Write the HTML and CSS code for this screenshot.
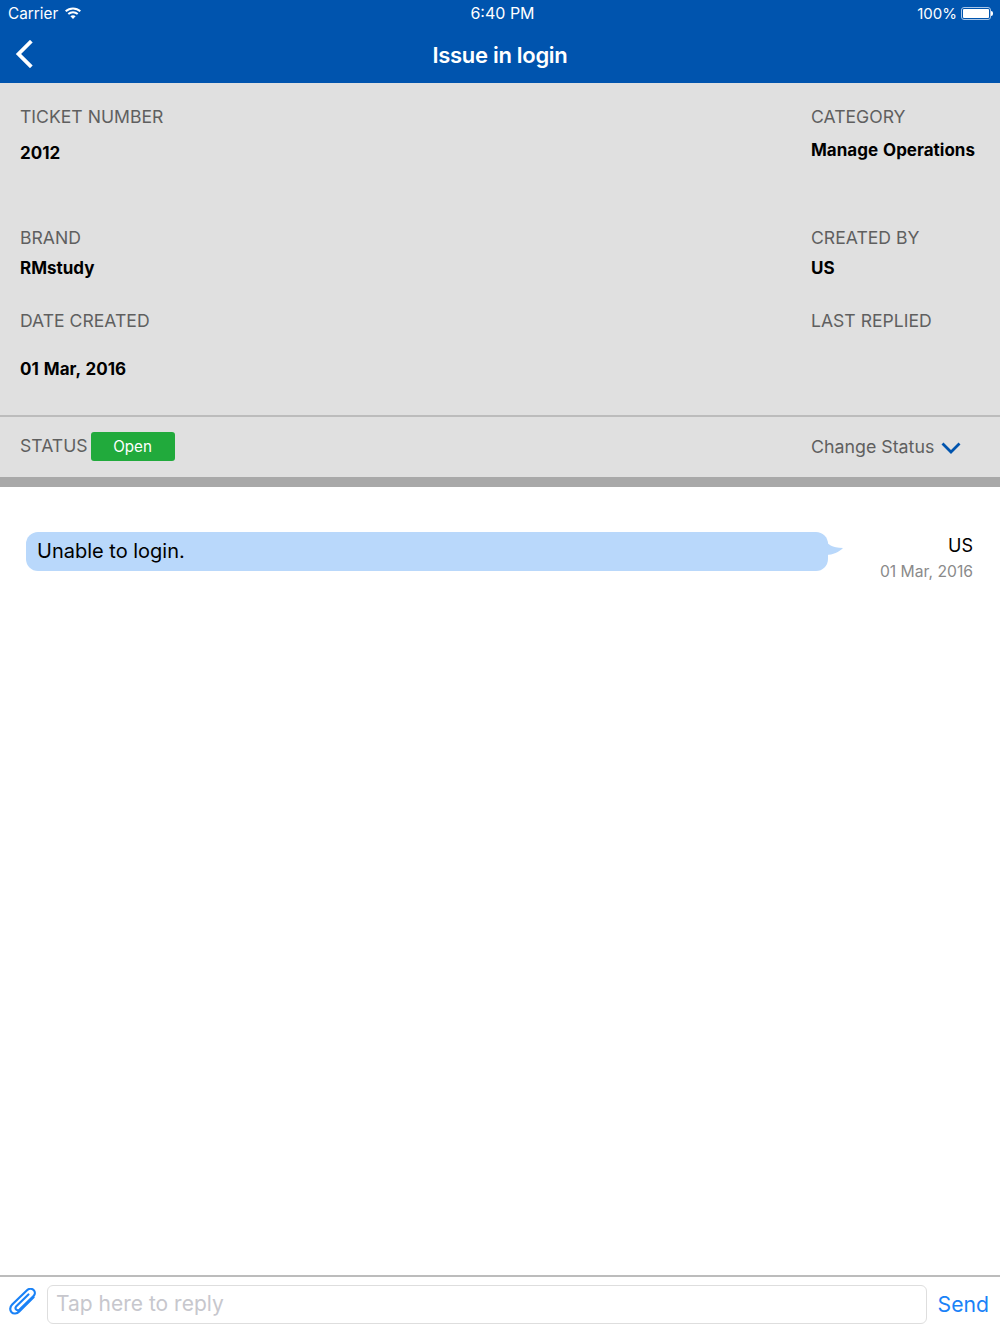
FILE: index.html
```html
<!DOCTYPE html>
<html lang="en">
<head>
    <meta charset="UTF-8">
    <meta name="viewport" content="width=device-width, initial-scale=1.0">
    <title>Issue in login</title>
    <link rel="stylesheet" href="styles.css">
</head>
<body>
    <div class="screen">
        <!-- Status bar + nav -->
        <header class="top-bar">
            <div class="status-bar">
                <div class="status-left">
                    <span>Carrier</span>
                    <svg class="wifi" width="16" height="12" viewBox="0 0 16 12" fill="none" stroke="#fff" stroke-width="2">
                        <path d="M.7 4.300C4.800 .4 11.200 .4 15.300 4.300"/>
                        <path d="M3.300 7C6 4.500 10 4.500 12.700 7"/>
                        <path d="M8 12L5.400 9.200C6.900 8 9.100 8 10.600 9.200Z" fill="#fff" stroke="none"/>
                    </svg>
                </div>
                <span class="status-time">6:40 PM</span>
                <div class="status-right">
                    <span>100%</span>
                    <div class="battery"><div class="battery-fill"></div></div>
                    <div class="battery-tip"></div>
                </div>
            </div>
            <nav class="nav-bar">
                <svg class="back-icon" width="18" height="28" viewBox="0 0 18 28" fill="none" stroke="#fff" stroke-width="3.800" stroke-linecap="square">
                    <path d="M15 2.500L3.500 14L15 25.500"/>
                </svg>
                <h1>Issue in login</h1>
            </nav>
        </header>

        <!-- Ticket details -->
        <section class="details">
            <div class="detail-grid">
                <div class="cell">
                    <div class="label">TICKET NUMBER</div>
                    <div class="value gap-lg">2012</div>
                </div>
                <div class="cell">
                    <div class="label">CATEGORY</div>
                    <div class="value gap-md">Manage Operations</div>
                </div>
                <div class="cell">
                    <div class="label">BRAND</div>
                    <div class="value gap-sm">RMstudy</div>
                </div>
                <div class="cell">
                    <div class="label">CREATED BY</div>
                    <div class="value gap-sm">US</div>
                </div>
                <div class="cell">
                    <div class="label">DATE CREATED</div>
                    <div class="value gap-xl">01 Mar, 2016</div>
                </div>
                <div class="cell">
                    <div class="label">LAST REPLIED</div>
                </div>
            </div>
            <div class="status-row">
                <div class="status-info">
                    <span class="label">STATUS</span>
                    <span class="badge">Open</span>
                </div>
                <div class="change-status">
                    <span>Change Status</span>
                    <svg class="chevron" width="20" height="12" viewBox="0 0 20 12" fill="none" stroke="#0054ae" stroke-width="2.800">
                        <path d="M1.500 1.500L10 10L18.500 1.500"/>
                    </svg>
                </div>
            </div>
        </section>

        <!-- Messages -->
        <main class="thread">
            <div class="message">
                <div class="bubble">
                    Unable to login.
                    <svg class="bubble-tail" width="18" height="16" viewBox="0 0 18 16">
                        <path d="M0 0C1 4 6 8 17 8C13 12 7 15 0 15Z" fill="#b9d8fb"/>
                    </svg>
                </div>
                <div class="meta">
                    <div class="meta-author">US</div>
                    <div class="meta-date">01 Mar, 2016</div>
                </div>
            </div>
        </main>

        <!-- Reply box -->
        <footer class="reply-bar">
            <svg class="clip-icon" width="28" height="28" viewBox="1.500 1.500 24.500 24.500" fill="none" stroke="#1a82f7" stroke-width="1.900" stroke-linecap="round">
                <path d="M23 9.500L10.500 22C8.300 24.200 5.300 24.300 3.700 22.700C2 21 2.300 18 4.300 16L17.500 3.300C19 1.900 21.500 1.800 23 3.300C24.500 4.800 24.500 7 23 8.500L10.800 20.300C9.800 21.200 8.500 21.200 7.700 20.400C6.900 19.600 7 18.300 7.900 17.400L18.500 7.200"/>
            </svg>
            <div class="reply-input">Tap here to reply</div>
            <span class="send-btn">Send</span>
        </footer>
    </div>
</body>
</html>
```

FILE: styles.css
```css
:root {
    --primary: #0054ae;
    --panel: #e0e0e0;
    --muted: #5f5f5f;
}

/* Base Styles */
* {
    box-sizing: border-box;
}

html, body {
    margin: 0;
    height: 100%;
}

body {
    font-family: Inter, "Noto Sans", sans-serif;
    background: #fff;
    color: #000;
}

.screen {
    display: flex;
    flex-direction: column;
    height: 1333px;
    overflow: hidden;
}

/* Top Bar */
.top-bar {
    height: 83px;
    flex: none;
    background: var(--primary);
    color: #fff;
}

.status-bar {
    display: grid;
    grid-template-columns: 1fr auto 1fr;
    align-items: center;
    height: 27px;
    padding: 0 7px 0 8px;
    font-size: 15.300px;
}

.status-left {
    display: flex;
    align-items: center;
    gap: 7px;
}

.wifi {
    margin-top: -2px;
}

.status-time {
    margin-left: 4px;
    padding-bottom: 1px;
    font-size: 16px;
}

.status-right {
    display: flex;
    align-items: center;
    justify-content: flex-end;
    font-size: 15px;
}

.battery {
    width: 30px;
    height: 13px;
    margin-left: 4px;
    padding: 1px;
    border: 1px solid #a9c6e8;
    border-radius: 3px;
}

.battery-fill {
    height: 100%;
    background: #fff;
    border-radius: 1px;
}

.battery-tip {
    width: 2px;
    height: 5px;
    background: #fff;
    border-radius: 0 2px 2px 0;
}

.nav-bar {
    position: relative;
    display: flex;
    align-items: center;
    justify-content: center;
    height: 56px;
}

.nav-bar h1 {
    margin: 0;
    font-size: 22px;
    font-weight: 600;
    letter-spacing: -0.300px;
}

.back-icon {
    position: absolute;
    left: 15px;
    top: 13px;
}

/* Ticket Details */
.details {
    flex: none;
    background: var(--panel);
}

.detail-grid {
    display: grid;
    grid-template-columns: 791px 1fr;
    grid-template-rows: 121px 83px 105px;
    height: 334px;
    padding: 24px 0 0 20px;
    border-bottom: 2px solid #bcbcbc;
}

.label {
    font-size: 17.600px;
    line-height: 20px;
    color: var(--muted);
}

.value {
    font-size: 17px;
    line-height: 20px;
    font-weight: 700;
    word-spacing: 1px;
}

.gap-sm { margin-top: 10px; }
.gap-md { margin-top: 13px; }
.gap-lg { margin-top: 16px; }
.gap-xl { margin-top: 28px; }

.status-row {
    display: grid;
    grid-template-columns: 791px 1fr;
    align-items: center;
    height: 70px;
    padding: 0 0 2px 20px;
    border-bottom: 10px solid #a9a9a9;
}

.status-info {
    display: flex;
    align-items: center;
    gap: 3px;
}

.badge {
    width: 84px;
    height: 29px;
    background: #21aa3c;
    border-radius: 3px;
    color: #fff;
    font-size: 15.200px;
    line-height: 30px;
    text-align: center;
}

.change-status {
    display: flex;
    align-items: center;
    gap: 7px;
    font-size: 17.800px;
    color: var(--muted);
}

.chevron {
    margin-top: 3px;
}

/* Messages */
.thread {
    flex: 1;
    padding: 45px 27px 0 26px;
}

.message {
    display: flex;
    justify-content: space-between;
}

.bubble {
    position: relative;
    width: 802px;
    height: 39px;
    padding-left: 11px;
    background: #b9d8fb;
    border-radius: 12px;
    font-size: 20px;
    line-height: 39px;
}

.bubble-tail {
    position: absolute;
    left: 800px;
    top: 8px;
}

.meta {
    text-align: right;
}

.meta-author {
    margin-top: 3px;
    font-size: 18px;
    line-height: 22px;
}

.meta-date {
    margin-top: 5px;
    font-size: 15.700px;
    line-height: 20px;
    color: #8a8a8a;
}

/* Reply Bar */
.reply-bar {
    display: flex;
    align-items: flex-start;
    flex: none;
    height: 58px;
    padding: 8px 11px 0 9px;
    border-top: 2px solid #bcbcbc;
}

.clip-icon {
    flex: none;
    margin-top: 3px;
}

.reply-input {
    flex: 1;
    height: 39px;
    margin: 0 11px 0 10px;
    padding-left: 8px;
    border: 1px solid #dedede;
    border-radius: 6px;
    font-size: 21px;
    line-height: 35px;
    color: #c7c7cd;
}

.send-btn {
    font-size: 21.200px;
    line-height: 39px;
    color: #1a82f7;
}
```
